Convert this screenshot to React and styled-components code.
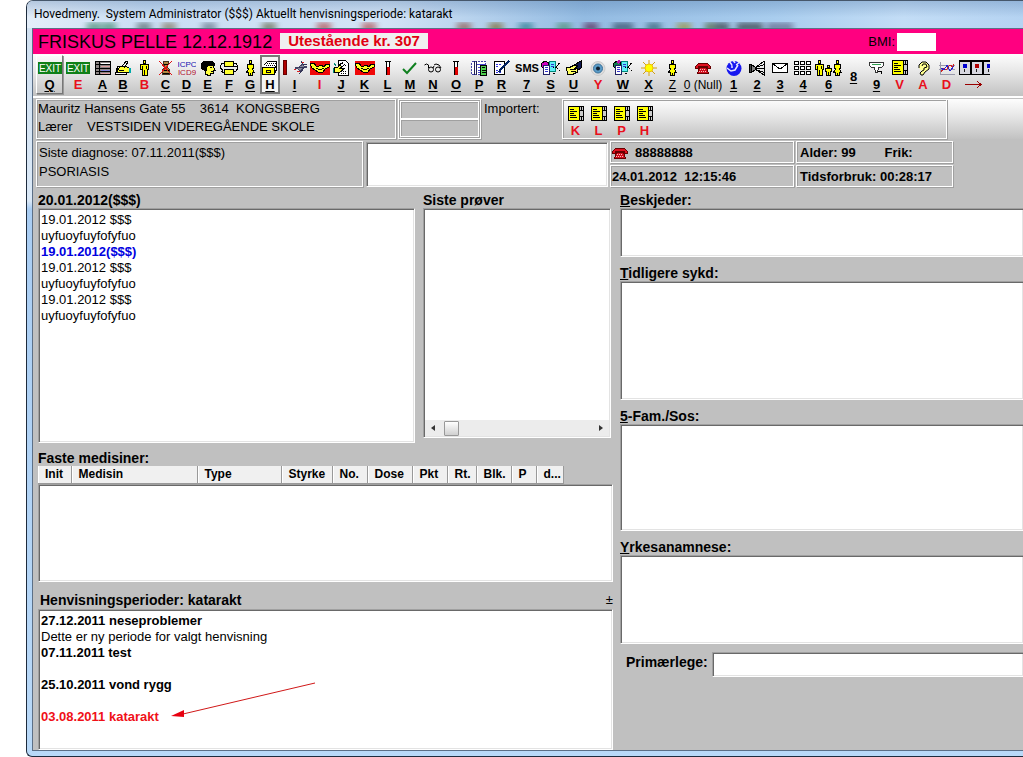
import React from "react";
import styled, { createGlobalStyle, css } from "styled-components";

const GlobalStyle = createGlobalStyle`
  * {
    box-sizing: border-box;
  }

  body {
    margin: 0;
    background: #fff;
    font-family: "Liberation Sans", Arial, sans-serif;
    font-size: 13px;
    line-height: 16px;
    color: #000;
    overflow: hidden;
  }

  button, input, textarea {
    font: inherit;
    color: inherit;
    border-radius: 0;
  }
`;

const Window = styled.div`
  display: flex;
  flex-direction: column;
  min-height: 100vh;
  margin-left: 26px;
  padding: 0 0 5px 5px;
  border: 1px solid #1d2b3d;
  border-right: 0;
  border-top-color: #46576b;
  border-radius: 7px 0 0 6px;
  background: linear-gradient(#cfdff0, #dbe9f7 200px, #a9cdf3 208px, #b9d9f8);
  overflow: hidden;
`;

const TitleBar = styled.header`
  position: relative;
  flex: none;
  height: 27px;
  margin-left: -5px;
  padding: 4px 7px;
  overflow: hidden;
  background:
    linear-gradient(rgba(70, 110, 160, 0.3), rgba(255, 255, 255, 0) 60%),
    linear-gradient(90deg, #e4eef9, #c9def4 12%, #d3e4f6 36%, #93bbe2 56%, #a9cdee 75%, #c3ddf6 88%, #b5d3f2);
`;

const TitleText = styled.h1`
  position: relative;
  margin: 0;
  font: 12px/18px Roboto, sans-serif;
  white-space: pre;
`;

const Reflection = styled.svg`
  position: absolute;
  left: 0;
  bottom: 0;
`;

const Client = styled.main`
  flex: 1;
  display: flex;
  flex-direction: column;
  border: 1px solid #5c6f86;
  border-right: 0;
  background: #c0c0c0;
`;

const Banner = styled.div`
  display: flex;
  align-items: center;
  flex: none;
  height: 25px;
  padding: 0 87px 0 5px;
  background: #ff0080;
`;

const PatientName = styled.h2`
  margin: 0;
  font-size: 18px;
  font-weight: normal;
  line-height: 24px;
  white-space: nowrap;
`;

const Outstanding = styled.strong`
  margin: 0 0 2px 8px;
  padding: 0 8px;
  background: #f0f0f0;
  color: #e00010;
  font-size: 15px;
  white-space: nowrap;
`;

const BmiLabel = styled.label`
  display: flex;
  align-items: center;
  gap: 2px;
  margin-left: auto;

  input {
    width: 39px;
    height: 18px;
    border: 0;
    background: #fff;
  }
`;

const metal = css`
  background: linear-gradient(#fdfdfd, #e8e8e8 40%, #c2c2c2);
`;

const Toolbar = styled.nav`
  display: flex;
  flex: none;
  height: 44px;
  padding: 1px 3px;
  border-bottom: 2px solid #fff;
  ${metal}
`;

const ToolButton = styled.button`
  display: flex;
  flex: none;
  flex-direction: column;
  align-items: center;
  gap: 1px;
  width: ${(p) => p.$width}px;
  height: 39px;
  padding: 4px 0 0;
  border: 1px solid transparent;
  background: none;
  color: ${(p) => (p.$red ? "#e8101c" : "#000")};
  font-size: ${(p) => (p.$light ? 12 : 13)}px;
  font-weight: ${(p) => (p.$light ? "normal" : "bold")};
  line-height: 16px;
  white-space: nowrap;

  ${(p) => p.$raised && css`
    border-color: #fff #777 #777 #fff;
    box-shadow: 1px 1px 0 #999;
  `}

  ${(p) => p.$pressed && css`
    border: 2px solid #777;
    padding-top: 3px;
    background: #f4f4f4;
  `}

  svg {
    flex: none;
    display: block;
  }

  span {
    text-decoration: ${(p) => (p.$red ? "none" : "underline")};
    text-underline-offset: 2px;
  }
`;

const panel = css`
  border: 1px solid #fff;
  box-shadow: inset 1px 1px 0 #a0a0a0, 1px 1px 0 #a0a0a0;
`;

const well = css`
  border: 1px solid;
  border-color: #a0a0a0 #fff #fff #a0a0a0;
  background: #fff;
  box-shadow: inset 1px 1px 0 #696969, inset -1px -1px 0 #e3e3e3;
`;

const InfoRow = styled.section`
  display: flex;
  flex: none;
  height: 43px;
  padding: 1px 0 2px 3px;
`;

const AddressPanel = styled.div`
  flex: none;
  width: 360px;
  padding-left: 1px;
  line-height: 18px;
  white-space: pre;
  ${panel}
`;

const SplitPanel = styled.div`
  display: flex;
  flex-direction: column;
  flex: none;
  width: 83px;
  margin-left: 2px;
  padding: 1px;
  ${panel}

  div {
    flex: 1;
    ${panel}
  }
`;

const ImportLabel = styled.div`
  flex: none;
  width: 81px;
  padding: 2px 3px;
`;

const ImportArea = styled.div`
  flex: 1;
  display: flex;
  ${metal}
`;

const ImportPanel = styled.div`
  display: flex;
  width: 385px;
  padding: 1px 0 0 1px;
  ${panel}
`;

const DetailRow = styled.section`
  display: flex;
  flex: none;
  height: 47px;
  padding: 0 0 1px 3px;
`;

const DiagnosisPanel = styled.div`
  flex: none;
  width: 327px;
  padding: 1px 2px;
  line-height: 19px;
  ${panel}
`;

const QuickNote = styled.textarea`
  flex: none;
  width: 242px;
  margin: 1px 2px 0 3px;
  resize: none;
  outline: 0;
  ${well}
`;

const StatusGrid = styled.div`
  display: grid;
  grid-template-columns: 184px 157px;
  gap: 2px;
`;

const StatusCell = styled.div`
  display: flex;
  align-items: center;
  gap: ${(p) => p.$gap || 2}px;
  padding: 1px ${(p) => (p.$indent ? 3 : 1)}px 0;
  font-weight: bold;
  white-space: pre;
  ${panel}
`;

const Body = styled.div`
  flex: 1;
  display: grid;
  grid-template-columns: 575px minmax(0, 1fr);
  column-gap: 7px;
  padding: 4px 0 0 5px;
`;

const LeftColumn = styled.div`
  display: flex;
  flex-direction: column;
`;

const Lists = styled.div`
  display: grid;
  grid-template-columns: 377px 188px;
  column-gap: 8px;
`;

const Heading = styled.h3`
  margin: 0;
  font-size: 14px;
  font-weight: bold;
  line-height: 16px;
`;

const ListBox = styled.div`
  position: relative;
  display: flex;
  flex-direction: column;
  flex: ${(p) => (p.$fill ? 1 : "none")};
  height: ${(p) => (p.$height ? p.$height + "px" : "auto")};
  padding: 3px 2px 1px;
  ${well}
`;

const Line = styled.div`
  height: 16px;
  color: ${(p) => p.$color || "#000"};
  font-weight: ${(p) => (p.$bold ? "bold" : "normal")};
  white-space: nowrap;
`;

const ScrollBar = styled.div`
  display: flex;
  align-items: center;
  height: 16px;
  margin: auto -1px 0;
  padding: 0 5px;
  background: #ececec;

  i {
    width: 15px;
    height: 15px;
    margin: 0 auto 0 8px;
    border: 1px solid #999;
    border-radius: 1px;
    background: linear-gradient(#fff, #d0d0d0);
  }
`;

const Medicines = styled.section`
  padding-top: 7px;
`;

const MedTable = styled.table`
  table-layout: fixed;
  width: 525px;
  border-collapse: collapse;

  th {
    height: 17px;
    padding: 0 0 0 7px;
    border-right: 1px solid #999;
    border-bottom: 1px solid #999;
    background: #f0f0f0;
    box-shadow: inset 1px 0 0 #fff;
    font-size: 12px;
    line-height: 15px;
    text-align: left;
    white-space: nowrap;
  }
`;

const PeriodHeader = styled.div`
  display: flex;
  justify-content: space-between;
  padding: 10px 0 1px 2px;
`;

const Plus = styled.button`
  padding: 0;
  border: 0;
  background: none;
`;

const Arrow = styled.svg`
  position: absolute;
  left: 130px;
  top: 70px;
  pointer-events: none;
`;

const Field = styled.label`
  display: block;
  margin-bottom: 8px;
  font-size: 14px;
  font-weight: bold;

  textarea {
    display: block;
    width: 100%;
    height: ${(p) => p.$height}px;
    resize: none;
    outline: 0;
    font-weight: normal;
    ${well}
    border-right-width: 0;
  }
`;

const DoctorField = styled.label`
  display: flex;
  gap: 4px;
  padding-left: 6px;
  font-size: 14px;
  font-weight: bold;
  line-height: 20px;

  input {
    flex: 1;
    min-width: 0;
    height: 25px;
    outline: 0;
    ${well}
    border-right-width: 0;
  }
`;

function Svg({ w = 16, h = 16, smooth, children }) {
  return (
    <svg
      width={w}
      height={h}
      viewBox={`0 0 ${w} ${h}`}
      fill="none"
      stroke="#000"
      fontWeight="normal"
      shapeRendering={smooth ? "auto" : "crispEdges"}
      aria-hidden="true"
    >
      {children}
    </svg>
  );
}

const ExitIcon = () => (
  <Svg w={24}>
    <rect x="0" y="2" width="24" height="12" fill="#108018" stroke="none" />
    <text x="12" y="12" textAnchor="middle" fontSize="10" fill="#fff" stroke="none">EXIT</text>
  </Svg>
);

const CabinetIcon = () => (
  <Svg>
    <path d="M.5 1.5h15v13H.5z" fill="#8c8484" />
    <path d="M1 4.500h15M1 8.500h15M1 11.500h15M4.500 2v12" />
    <path d="M6 3h9" stroke="#fff" />
    <path d="M6 6.500h9M6 13h9" stroke="#e0a0a0" />
    <path d="M6 10h9" stroke="#8080d8" />
  </Svg>
);

const WriteIcon = () => (
  <Svg>
    <path d="M2.500 6.500h9v8h-11z" fill="#fff" />
    <path d="M2 11l3-4 5-1 4 2v4l-3 1-5-1H2z" fill="#ffff30" />
    <path d="M6.500 7.500L11 1l2 1-4 6M4 10h5M5 12h4" />
    <path d="M14.500 8v5" stroke="#0aa" strokeWidth="2" />
  </Svg>
);

const ManShape = ({ x = 0 }) => (
  <g transform={`translate(${x} 0)`}>
    <path d="M3.500.5h2v3h-2z" fill="#ffff00" />
    <path d="M.5 4.500h8v5h-1.500v6h-5v-6H.5z" fill="#ffff00" />
    <path d="M4.500 10v6M2.500 6v3M6.500 6v3" />
  </g>
);

const WomanShape = ({ x = 0 }) => (
  <g transform={`translate(${x} 0)`}>
    <path d="M3.500.5h2v3h-2z" fill="#ffff00" />
    <path d="M1.500 4.500h6v4l-1 .5 2 3.500h-2v3h-4v-3h-2l2-3.500-1-.5z" fill="#ffff00" />
    <path d="M4.500 13v3" />
  </g>
);

const ManIcon = () => <Svg w={9}><ManShape /></Svg>;
const WomanIcon = () => <Svg w={9}><WomanShape /></Svg>;

const FamilyIcon = () => (
  <Svg w={28}>
    <ManShape />
    <path d="M12.500 5.500h2v2h-2zM10.500 8.500h6v3h-1v4h-4v-4h-1z" fill="#ffff00" />
    <path d="M13.500 12v4" />
    <WomanShape x={18} />
  </Svg>
);

const CrossedIcon = () => (
  <Svg>
    <path d="M5.500 1.500h5v3h-1v3l2 2v5h-7v-5l2-2v-3h-1z" fill="#b08840" stroke="#432" />
    <path d="M6 4.500h4M5 10.500h6M5 13h6" />
    <path d="M1 1l13 14M14 1L1 15" stroke="#e01010" />
  </Svg>
);

const CodeIcon = () => (
  <Svg w={18}>
    <text x="9" y="7" fontSize="8" textAnchor="middle" fill="#1010b0" stroke="none">ICPC</text>
    <text x="9" y="15" fontSize="8" textAnchor="middle" fill="#b01030" stroke="none">ICD9</text>
  </Svg>
);

const HeadIcon = () => (
  <Svg>
    <path d="M5 4h8l1 4 1 2h-2v3h-3v3l-5-2 1-3-3-3z" fill="#ffff40" />
    <path d="M1 8V4l3-3h7l3 2v2H9L6 7v3H4z" fill="#000" />
    <path d="M10 7.500h2M11 11.500h2" />
  </Svg>
);

const TransferIcon = () => (
  <Svg w={18}>
    <path d="M4.500 1.500h9v5h-9zM4.500 9.500h9v5h-9z" fill="#ffff30" />
    <path d="M4 3.500H2L.5 6v2L3 10.500M14 3.500h2L17.500 6v3l-2 2.500h-2M1 11l3 2M14 6l3 1" />
  </Svg>
);

const CardFileIcon = () => (
  <Svg>
    <path d="M1.500 5.500l4-4h9v8l-2 5" fill="#fff" />
    <path d="M5 3.500h9M4 5.500h9" strokeDasharray="1 1" />
    <path d="M.5 7.500h12v7H.5z" fill="#ffff00" />
    <path d="M4.500 10.500h4v2h-4zM13 7.500l2-2M13 12l2-3" />
  </Svg>
);

const TubeIcon = () => (
  <Svg w={6}>
    <path d="M1.500 1.500h3v13h-3z" fill="#fff" />
    <path d="M0 1.500h6" />
    <path d="M2 7h2v7H2z" fill="#f00000" stroke="#d00000" />
  </Svg>
);

const TubeBirdIcon = () => (
  <Svg w={26}>
    <path d="M1.500.5h3v14h-3z" fill="#b00000" stroke="#600" />
    <path d="M13 8l4-1 4-3 1 2 3 1-4 1-3 3-2-2z" fill="#889" stroke="#446" />
    <path d="M19 1l2 3 4 1M17 7h6M17 14l5-6" stroke="#335" />
    <path d="M12 9h2M20 2h2M15 11l3 1" stroke="#d22" />
  </Svg>
);

const HandshakeIcon = () => (
  <Svg w={20}>
    <rect y="1" width="20" height="14" fill="#f00808" stroke="none" />
    <path d="M0 3.500h4L7 7l4-2 3 2 2-3h4l-1 3-4 2-2 3H8L5 10 2 8z" fill="#ffff20" />
    <path d="M6 8l4 2 4-2" />
  </Svg>
);

const DocHandIcon = () => (
  <Svg>
    <path d="M5.500.5h7l3 3v12h-10z" fill="#fff" />
    <path d="M7 3.500h4M12 5.500h2M8 11.500h6M8 13.500h6" strokeDasharray="1 1" />
    <path d="M1 7.500h3l3-2 2 1-2 2h4l-2 2-3 2H1z" fill="#ffff40" />
    <path d="M5 6l5-4M8 8l4-4" />
    <path d="M1 3l2 3M.5 8v5" stroke="#087" />
  </Svg>
);

const CheckIcon = () => (
  <Svg smooth><path d="M1 9l4 4L14 3" stroke="#108020" strokeWidth="2" /></Svg>
);

const GlassesIcon = () => (
  <Svg w={18} smooth>
    <path d="M.5 5l2-1 2 1v3M9 8l1-2M10 5l2-1 3 1 2 3" />
    <circle cx="7" cy="9.500" r="2.500" />
    <circle cx="14" cy="9.500" r="2.500" />
  </Svg>
);

const LedgerIcon = () => (
  <Svg>
    <path d="M.5 1.500h14v13H.5z" fill="#fff" stroke="#44a" strokeDasharray="2 1" />
    <path d="M3.500 1v14M5.500 1v14" stroke="#225" />
    <path d="M6 4.500h8M7 7.500h2M7 10.500h2M7 12.500h2" stroke="#44c" />
    <path d="M9.500 5.500h6v10h-6z" fill="#50d050" />
    <path d="M11 7.500h3M11 10.500h4M11 12.500h4" />
  </Svg>
);

const PenPageIcon = () => (
  <Svg>
    <path d="M.5 1.500h10v13H.5z" fill="#fff" />
    <path d="M2 4.500h5M2 6.500h3M2 10.500h2M2 12.500h6" stroke="#33d" strokeDasharray="2 1" />
    <path d="M15 1L7 9l-2 3" stroke="#002060" strokeWidth="2" />
  </Svg>
);

const SmsIcon = () => (
  <Svg w={26}>
    <text x="13" y="12" textAnchor="middle" fontSize="11" fontWeight="bold" fill="#000" stroke="none">SMS</text>
  </Svg>
);

const CardsIcon = ({ green }) => (
  <Svg w={20}>
    <path d="M0 4l4-3 4 2-2 4H1z" fill={green ? "#108050" : "#d000c0"} />
    {green && <path d="M3 2l3-2 2 2-3 2z" fill="#c010b0" stroke="none" />}
    <path d="M8.500 1.500h6v10h-6z" fill="#60f0f8" stroke="#087" />
    <path d="M2.500 5.500h6v9h-6z" fill="#fff" stroke="#226" />
    <path d="M4 7.500h3M4 9.500h3M4 11.500h3M10 4.500h3M10 6.500h3" stroke="#33c" />
    <path d="M18.500 3l-3 4 3 4M12 13h3M16 7h-4" strokeDasharray="2 1" />
  </Svg>
);

const PointHandIcon = () => (
  <Svg>
    <path d="M8 5l7-4v7l-3 2z" fill="#101850" />
    <path d="M.5 8l4-1 4-2 3 1-2 2h2v4l-4 2h-6z" fill="#ffff60" />
    <path d="M4 9.500h6M5 11.500h5" />
  </Svg>
);

const EyeIcon = () => (
  <Svg smooth>
    <circle cx="8" cy="8.500" r="7" fill="#dcdcdc" stroke="#ccc" />
    <circle cx="8" cy="8.500" r="4.500" fill="#5a9cc8" stroke="#3a7098" />
    <circle cx="8" cy="8.500" r="2" fill="#102030" stroke="none" />
  </Svg>
);

const SunIcon = () => (
  <Svg smooth>
    <path d="M8 0v16M0 8h16M2 2l12 12M14 2L2 14" stroke="#d0a018" />
    <circle cx="8" cy="8" r="4" fill="#ffff00" stroke="#f0c000" />
  </Svg>
);

const PhoneIcon = () => (
  <Svg>
    <path d="M.5 6.500l3-3h9l3 3v2h-3v-2h-9v2h-3z" fill="#e01020" stroke="#600" />
    <path d="M4.500 7.500h7l2 6h-11z" fill="#d01020" stroke="#600" />
    <path d="M5 9.500h6M4 11.500h8" stroke="#fbb" strokeDasharray="1 1" />
  </Svg>
);

const GlobeIcon = () => (
  <Svg smooth>
    <circle cx="8" cy="8.500" r="7.500" fill="#1818f0" stroke="none" />
    <path d="M3 1l3 4v3M10 5l4-3M1 8l4 3 4-1 3-5M7 0l2 3" stroke="#e8e8ff" strokeWidth="1.500" />
    <circle cx="8" cy="5" r="1.500" fill="#1818f0" stroke="none" />
  </Svg>
);

const RaysIcon = () => (
  <Svg>
    <path d="M.5 4.500h2v8h-2z" fill="#444" />
    <path d="M3 5l3 2v3l-3 2" fill="#888" />
    <path d="M6 8.500h9.500M15.500 1v15M6 8l9-7M6 9l9 6M7 7.500l8-3M7 9.500l8 3" />
  </Svg>
);

const MailIcon = () => (
  <Svg>
    <path d="M.5 3.500h15v9H.5z" fill="#fff" />
    <path d="M1 4l7 5 7-5" />
  </Svg>
);

const BlocksIcon = () => (
  <Svg w={18}>
    {[0, 6, 12].map((x) => [1, 6, 11].map((y) => (
      <rect key={`${x}-${y}`} x={x + 0.5} y={y + 0.5} width="4" height="3" fill="#fff" />
    )))}
  </Svg>
);

const FilterIcon = () => (
  <Svg>
    <path d="M.5 2.500h14v3l-2 2h-3l-1 5h-2l-1-5h-3l-2-2z" fill="#fff" stroke="#333" />
    <path d="M3 4.500h9" stroke="#30a050" />
    <path d="M9 11.500h3v2" />
  </Svg>
);

const NoteIcon = () => (
  <Svg>
    <path d="M.5.5h11v14H.5z" fill="#ffff00" />
    <path d="M2 3.500h4M2 5.500h7M2 7.500h4M2 9.500h6M2 11.500h7" />
    <path d="M11.500.5h4v14h-4z" fill="#ccc" />
    <path d="M12 4.500h3M12 10.500h3M13.500 1v3M13.500 11v3" />
  </Svg>
);

const EarIcon = () => (
  <Svg smooth>
    <path d="M4 8V5l3-3h4l3 3v4l-4 3-2 3H6l-1-2 2-2" fill="#ffff90" />
    <path d="M7 6l1-2h3l1 3-3 1v2l-2 1" />
  </Svg>
);

const ChartIcon = () => (
  <Svg>
    <path d="M1.500 2v12.500H16M0 5.500h16M0 9.500h16" stroke="#99a" />
    <path d="M2 12l3-4 2 2 4-5 3 2 1-3" stroke="#d02020" />
    <path d="M2 8l3 2 3-5 3 6 4-5" stroke="#2020d0" />
  </Svg>
);

const PanelsIcon = () => (
  <Svg w={31}>
    {[0, 12, 24].map((x, i) => (
      <g key={x}>
        <rect x={x + 0.5} y="1.500" width="11" height="13" fill="#d8d8e0" />
        <path d={`M${x} 1h12`} strokeWidth="2" />
        <rect x={x + 4} y="4" width="4" height="4" fill={i === 1 ? "#b00000" : "#0000d0"} stroke="none" />
        <path d={`M${x + 5}.5 9v3`} stroke="#222" />
      </g>
    ))}
  </Svg>
);

const tools = [
  { key: "Q", width: 27, icon: <ExitIcon />, raised: true },
  { key: "E", width: 30, icon: <ExitIcon />, red: true },
  { key: "A", width: 19, icon: <CabinetIcon /> },
  { key: "B", width: 22, icon: <WriteIcon /> },
  { key: "B", width: 21, icon: <ManIcon />, red: true },
  { key: "C", width: 21, icon: <CrossedIcon /> },
  { key: "D", width: 21, icon: <CodeIcon /> },
  { key: "E", width: 21, icon: <HeadIcon /> },
  { key: "F", width: 22, icon: <TransferIcon /> },
  { key: "G", width: 20, icon: <WomanIcon /> },
  { key: "H", width: 20, icon: <CardFileIcon />, pressed: true },
  { key: "I", width: 29, icon: <TubeBirdIcon /> },
  { key: "I", width: 21, icon: <HandshakeIcon />, red: true },
  { key: "J", width: 22, icon: <DocHandIcon /> },
  { key: "K", width: 25, icon: <HandshakeIcon /> },
  { key: "L", width: 21, icon: <TubeIcon /> },
  { key: "M", width: 24, icon: <CheckIcon /> },
  { key: "N", width: 22, icon: <GlassesIcon /> },
  { key: "O", width: 24, icon: <TubeIcon /> },
  { key: "P", width: 22, icon: <LedgerIcon /> },
  { key: "R", width: 23, icon: <PenPageIcon /> },
  { key: "7", width: 27, icon: <SmsIcon /> },
  { key: "S", width: 21, icon: <CardsIcon /> },
  { key: "U", width: 25, icon: <PointHandIcon /> },
  { key: "Y", width: 24, icon: <EyeIcon />, red: true },
  { key: "W", width: 26, icon: <CardsIcon green /> },
  { key: "X", width: 25, icon: <SunIcon /> },
  { key: "Z", width: 23, icon: <WomanIcon />, light: true },
  { key: "0", rest: " (Null)", width: 38, icon: <PhoneIcon />, light: true },
  { key: "1", width: 23, icon: <GlobeIcon /> },
  { key: "2", width: 24, icon: <RaysIcon /> },
  { key: "3", width: 22, icon: <MailIcon /> },
  { key: "4", width: 24, icon: <BlocksIcon /> },
  { key: "6", width: 27, icon: <FamilyIcon /> },
  { key: "8", width: 23, icon: <Svg w={8} h={8} /> },
  { key: "9", width: 23, icon: <FilterIcon /> },
  { key: "V", width: 23, icon: <NoteIcon />, red: true },
  { key: "A", width: 24, icon: <EarIcon />, red: true },
  { key: "D", width: 23, icon: <ChartIcon />, red: true },
];

const reflections = [
  [430, "#843"], [462, "#775c10"], [492, "#187080"], [530, "#486"], [557, "#501040"],
  [586, "#203850"], [592, "#203850"], [620, "#205060"], [650, "#998a20"], [678, "#452"],
  [688, "#222"], [710, "#222"], [722, "#222"], [740, "#557"], [752, "#557"],
  [60, "#297a5a"], [75, "#297a5a"], [110, "#455"], [135, "#764"], [175, "#567"], [235, "#553"],
  [290, "#a33"], [335, "#a33"],
];

const columns = [
  ["Init", 33], ["Medisin", 126], ["Type", 84], ["Styrke", 51], ["No.", 35], ["Dose", 45],
  ["Pkt", 35], ["Rt.", 29], ["Blk.", 35], ["P", 25], ["d...", 27],
];

const notes = [
  { text: "19.01.2012 $$$" },
  { text: "uyfuoyfuyfofyfuo" },
  { text: "19.01.2012($$$)", bold: true, color: "#0000e0" },
  { text: "19.01.2012 $$$" },
  { text: "uyfuoyfuyfofyfuo" },
  { text: "19.01.2012 $$$" },
  { text: "uyfuoyfuyfofyfuo" },
];

const periods = [
  { text: "27.12.2011 neseproblemer", bold: true },
  { text: "Dette er ny periode for valgt henvisning" },
  { text: "07.11.2011 test", bold: true },
  { text: "" },
  { text: "25.10.2011 vond rygg", bold: true },
  { text: "" },
  { text: "03.08.2011 katarakt", bold: true, color: "#f01018" },
];

const fields = [
  { key: "B", rest: "eskjeder:", height: 49 },
  { key: "T", rest: "idligere sykd:", height: 119 },
  { key: "5", rest: "-Fam./Sos:", height: 107 },
  { key: "Y", rest: "rkesanamnese:", height: 89 },
];

const renderLines = (lines) =>
  lines.map((line, i) => (
    <Line key={i} $bold={line.bold} $color={line.color}>{line.text}</Line>
  ));

function App() {
  return (
    <>
      <GlobalStyle />
      <Window>
        <TitleBar>
          <Reflection width="800" height="14" aria-hidden="true">
            <filter id="soft"><feGaussianBlur stdDeviation="3" /></filter>
            <g filter="url(#soft)" opacity="0.7">
              {reflections.map(([x, color]) => (
                <rect key={x} x={x} y="9" width="14" height="8" fill={color} />
              ))}
            </g>
          </Reflection>
          <TitleText>Hovedmeny.  System Administrator ($$$) Aktuellt henvisningsperiode: katarakt</TitleText>
        </TitleBar>
        <Client>
          <Banner>
            <PatientName>FRISKUS PELLE 12.12.1912</PatientName>
            <Outstanding>Utestående kr. 307</Outstanding>
            <BmiLabel>BMI: <input /></BmiLabel>
          </Banner>
          <Toolbar>
            {tools.map((tool, i) => (
              <ToolButton
                key={i}
                $width={tool.width}
                $red={tool.red}
                $light={tool.light}
                $raised={tool.raised}
                $pressed={tool.pressed}
              >
                {tool.icon}
                <div><span>{tool.key}</span>{tool.rest}</div>
              </ToolButton>
            ))}
            <ToolButton $width={32} $red aria-label="Neste">
              <PanelsIcon />
              <Svg w={18}><path d="M0 7.500h17M12 4l4 3.500-4 3.500" stroke="#900" /></Svg>
            </ToolButton>
          </Toolbar>

          <InfoRow>
            <AddressPanel>
              <div>Mauritz Hansens Gate 55    3614  KONGSBERG</div>
              <div>Lærer    VESTSIDEN VIDEREGÅENDE SKOLE</div>
            </AddressPanel>
            <SplitPanel><div /><div /></SplitPanel>
            <ImportLabel>Importert:</ImportLabel>
            <ImportArea>
              <ImportPanel>
                {["K", "L", "P", "H"].map((key) => (
                  <ToolButton key={key} $width={23} $red>
                    <NoteIcon />
                    <span>{key}</span>
                  </ToolButton>
                ))}
              </ImportPanel>
            </ImportArea>
          </InfoRow>

          <DetailRow>
            <DiagnosisPanel>
              <div>Siste diagnose: 07.11.2011($$$)</div>
              <div>PSORIASIS</div>
            </DiagnosisPanel>
            <QuickNote aria-label="Notat" />
            <StatusGrid>
              <StatusCell $gap={7}><PhoneIcon />88888888</StatusCell>
              <StatusCell $indent>Alder: 99        Frik:</StatusCell>
              <StatusCell>24.01.2012  12:15:46</StatusCell>
              <StatusCell $indent>Tidsforbruk: 00:28:17</StatusCell>
            </StatusGrid>
          </DetailRow>

          <Body>
            <LeftColumn>
              <Lists>
                <div>
                  <Heading>20.01.2012($$$)</Heading>
                  <ListBox $height={235}>{renderLines(notes)}</ListBox>
                </div>
                <div>
                  <Heading>Siste prøver</Heading>
                  <ListBox $height={230}>
                    <ScrollBar>
                      <svg width="6" height="8"><path d="M5 1v6L1 4z" fill="#333" /></svg>
                      <i />
                      <svg width="6" height="8"><path d="M1 1v6l4-3z" fill="#333" /></svg>
                    </ScrollBar>
                  </ListBox>
                </div>
              </Lists>
              <Medicines>
                <Heading>Faste medisiner:</Heading>
                <MedTable>
                  <thead>
                    <tr>
                      {columns.map(([name, width]) => (
                        <th key={name} style={{ width }}>{name}</th>
                      ))}
                    </tr>
                  </thead>
                </MedTable>
                <ListBox $height={98} />
              </Medicines>
              <PeriodHeader>
                <Heading>Henvisningsperioder: katarakt</Heading>
                <Plus>±</Plus>
              </PeriodHeader>
              <ListBox $fill>
                {renderLines(periods)}
                <Arrow width="150" height="44" viewBox="0 0 150 44">
                  <path d="M14 34L146 3" stroke="#d01818" fill="none" />
                  <path d="M2 36l13-6v7z" fill="#e80010" />
                </Arrow>
              </ListBox>
            </LeftColumn>

            <div>
              {fields.map((field) => (
                <Field key={field.key} $height={field.height}>
                  <u>{field.key}</u>{field.rest}
                  <textarea />
                </Field>
              ))}
              <DoctorField>Primærlege: <input /></DoctorField>
            </div>
          </Body>
        </Client>
      </Window>
    </>
  );
}

export default App;
